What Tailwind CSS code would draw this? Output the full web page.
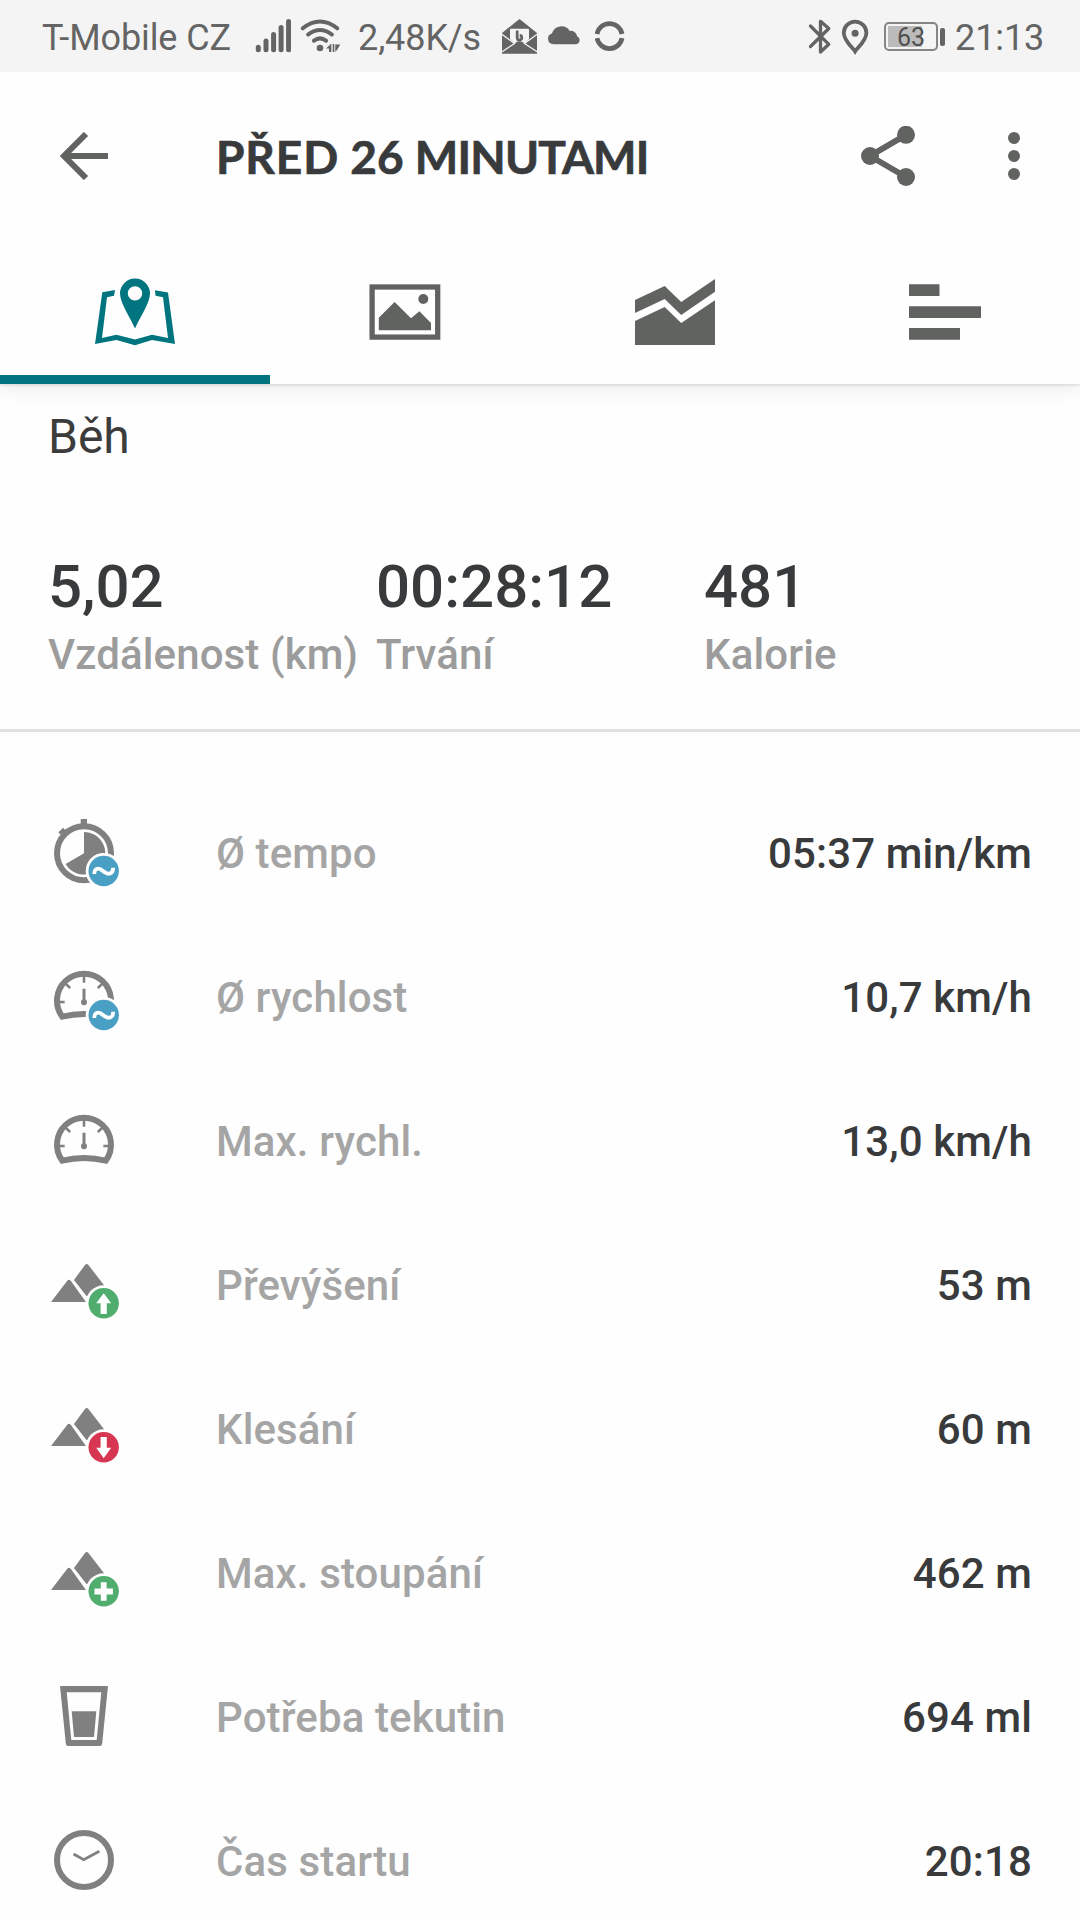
<!doctype html>
<html lang="cs">
  <head>
    <meta charset="UTF-8" />
    <meta name="viewport" content="width=device-width, initial-scale=1.0" />
    <title>Před 26 minutami</title>
    <script src="https://cdn.jsdelivr.net/npm/@tailwindcss/browser@4"></script>
  </head>
  <body class="bg-[#fefefe] h-[1920px] overflow-hidden font-['Roboto',sans-serif] text-[#383a3b]">
    <!-- Status bar -->
    <div class="relative z-10 h-[72px] bg-[#f4f4f4] text-[#646464] text-[36px] leading-[72px] flex items-center pl-[42px] pr-[36px] whitespace-nowrap">
      <span class="w-[213px] pt-[3px] tracking-[-0.1px]">T-Mobile CZ</span>
      <svg class="w-[36px] h-[72px] shrink-0" viewBox="255 0 36 72" fill="none" stroke="#646464" stroke-width="5" stroke-linecap="round">
        <path d="M258.3 47.3v2.5M266 41v8.8M273.6 34.5v15.3M281.1 27.5v22.3M288.6 21.5v28.3" />
      </svg>
      <svg class="w-[42px] h-[72px] ml-[9px] shrink-0" viewBox="300 0 42 72" fill="none" stroke="#646464" stroke-width="4" stroke-linecap="round">
        <path d="M302.8 28.3q17.2-13.6 34.4 0M308.2 34.5q11.8-9 23.6 0M314 40.7q6-4.6 12 0" />
        <circle cx="320" cy="48" r="3.3" fill="#646464" stroke="none" />
        <path d="M326 48.5l5.300-5v8.500h-2.300v-3.500zM332.700 44h1.600v8h-1.600zM335.300 44.500h5l-2.700 4.500-2.300 3z" fill="#646464" stroke="none" />
      </svg>
      <span class="w-[144px] ml-[16px] pt-[3px] tracking-[-0.1px]">2,48K/s</span>
      <svg class="w-[36px] h-[72px] shrink-0" viewBox="502 0 36 72" fill="#646464">
        <path d="M502 33 519.500 19 537 33V53.700H502z" />
        <path d="M510 29.700q0-1 1-1h17q1 0 1 1V39l-4.500 4.500q-5-4.500-10 0L510 39z" fill="#f4f4f4" />
        <path d="M501.500 34l13 9.500L501.500 52M537.500 34l-13 9.500 13 8.500" fill="none" stroke="#f4f4f4" stroke-width="1.300" />
        <path d="M517.200 30.500v7.500a2.300 2.300 0 1 0 2.500-2.600" fill="none" stroke="#646464" stroke-width="2.800" />
      </svg>
      <svg class="w-[34px] h-[72px] ml-[10px] shrink-0" viewBox="548 0 34 72" fill="#646464">
        <path d="M553.5 44.2a5.400 5.400 0 0 1-1.500-10.600 9.800 9.800 0 0 1 17.700-2.700 6.500 6.500 0 0 1 7.400 5.300 4.200 4.200 0 0 1-1 8z" />
      </svg>
      <svg class="w-[30px] h-[72px] ml-[13px] shrink-0" viewBox="595 0 30 72" fill="none" stroke="#646464" stroke-width="4.800">
        <path d="M597 34.200a12.700 12.700 0 0 1 25 0M597 38.300a12.700 12.700 0 0 0 25 0" transform="translate(0 -.2)" />
      </svg>
      <svg class="w-[24px] h-[72px] ml-auto shrink-0" viewBox="808 0 24 72" fill="none" stroke="#646464" stroke-width="3.300" stroke-linecap="round" stroke-linejoin="round">
        <path d="M810.5 26 828.8 44.3 820.5 52V21.3L828.8 28.5 810.5 46.5" />
      </svg>
      <svg class="w-[28px] h-[72px] ml-[9px] shrink-0" viewBox="841 0 28 72">
        <path d="M855.1 51.3c-1.500-2.600-11.300-10.600-11.300-18.400a11.300 11.300 0 0 1 22.600 0c0 7.800-9.800 15.800-11.300 18.400z" fill="none" stroke="#646464" stroke-width="3.800" />
        <circle cx="855.1" cy="33.3" r="3.500" fill="#646464" />
      </svg>
      <div class="ml-[15px] w-[54px] h-[29px] mt-[1px] shrink-0 border-2 border-[#858585] rounded-[5px] relative">
        <div class="absolute left-[2px] top-[2px] w-[34px] h-[21px] bg-[#bbbbbb]"></div>
        <span class="absolute inset-0 text-center leading-[27px] text-[25px] text-[#505050]">63</span>
      </div>
      <div class="ml-[2px] w-[5px] h-[18px] shrink-0 rounded-[2px] bg-[#646464] mt-[1px]"></div>
      <span class="ml-[10px] w-[89px] pt-[3px] tracking-[-0.1px]">21:13</span>
    </div>

    <!-- Toolbar and tabs -->
    <header class="h-[312px] bg-[#fefefe] shadow-[0_2px_20px_rgba(0,0,0,0.1),0_1px_3px_rgba(0,0,0,0.12)]">
      <div class="h-[168px] flex items-center pl-[60px] pr-[60px]">
        <svg class="w-[48px] h-[48px]" viewBox="0 0 48 48" fill="none" stroke="#616361" stroke-width="6">
          <path d="M48 24H4M26 2 4 24l22 22" />
        </svg>
        <h1 class="ml-[108px] pt-[1px] font-['Lato',sans-serif] font-bold text-[46px] leading-[60px] whitespace-nowrap [-webkit-text-stroke:0.7px_#383a3b]"><span class="tracking-[0.9px]">PŘED</span> 26 <span class="tracking-[-0.8px]">MINUTAMI</span></h1>
        <svg class="ml-auto w-[54px] h-[60px]" viewBox="861 126 54 60" fill="#616361">
          <path d="M906 134.8 870 156l36 21" fill="none" stroke="#616361" stroke-width="6" />
          <circle cx="870" cy="156" r="9" />
          <circle cx="906" cy="134.8" r="9" />
          <circle cx="906" cy="177" r="9" />
        </svg>
        <svg class="ml-[93px] w-[12px] h-[48px]" viewBox="0 0 12 48" fill="#616361">
          <circle cx="6" cy="6" r="6" />
          <circle cx="6" cy="24" r="6" />
          <circle cx="6" cy="42" r="6" />
        </svg>
      </div>
      <nav class="h-[144px] grid grid-cols-4">
        <div class="border-b-[9px] border-[#00757f] flex justify-center">
          <svg class="w-[90px] h-[90px] mt-[27px]" viewBox="90 267 90 90" fill="#00757f">
            <path d="M95 344 102.300 292.300 115 290 114 295.700 107 297.300 102 338 116.400 334.700 135 339.500 152 334.700 168 338 163 297.300 155.500 295.700 155 290.300 168 292.500 175 344 152 340 135 345.300 116.400 340z" />
            <path fill-rule="evenodd" d="M135 328.500C131 319 120 303 120 293.500a15 15 0 0 1 30 0C150 303 139 319 135 328.500zM135 286.200a7.200 7.200 0 1 0 0 14.400 7.200 7.200 0 0 0 0-14.400z" />
          </svg>
        </div>
        <div class="flex justify-center">
          <svg class="w-[90px] h-[90px] mt-[27px]" viewBox="360 267 90 90" fill="#616361">
            <rect x="372.100" y="287" width="65.600" height="50.100" fill="none" stroke="#616361" stroke-width="5.300" />
            <path d="M378.800 317.700 394.600 302 411 318.300 419.400 311.300 431 323V330.300H378.800z" />
            <circle cx="423.300" cy="299" r="5" />
          </svg>
        </div>
        <div class="flex justify-center">
          <svg class="w-[90px] h-[90px] mt-[27px]" viewBox="630 267 90 90" fill="#616361">
            <path d="M635 300 664.700 286 681.200 302 715 279V291.700L681.200 315 664.700 299 635 313z" />
            <path d="M635 321 664.700 307 681.200 323 715 300.300V345H635z" />
          </svg>
        </div>
        <div class="flex justify-center">
          <svg class="w-[90px] h-[90px] mt-[27px]" viewBox="900 267 90 90" fill="#616361">
            <path d="M909 284.200h30.500v11.800H909zM909 306.200h72v11.800h-72zM909 328h51v11.800h-51z" />
          </svg>
        </div>
      </nav>
    </header>

    <!-- Activity summary -->
    <section class="h-[348px] border-b-[3px] border-[#e0e0e0] pl-[48px]">
      <h2 class="pt-[25px] text-[48px] leading-[56px] text-[#3c3c3c]">Běh</h2>
      <div class="grid grid-cols-3 w-[984px] mt-[87px] font-medium whitespace-nowrap">
        <div>
          <div class="text-[60px] leading-[70px]">5,02</div>
          <div class="text-[42px] leading-[50px] mt-[8px] text-[#9b9c9b] tracking-[0.12px]">Vzdálenost (km)</div>
        </div>
        <div>
          <div class="text-[60px] leading-[70px]">00:28:12</div>
          <div class="text-[42px] leading-[50px] mt-[8px] text-[#9b9c9b] tracking-[0.12px]">Trvání</div>
        </div>
        <div>
          <div class="text-[60px] leading-[70px]">481</div>
          <div class="text-[42px] leading-[50px] mt-[8px] text-[#9b9c9b] tracking-[0.12px]">Kalorie</div>
        </div>
      </div>
    </section>

    <!-- Shared icon parts -->
    <svg class="hidden">
      <symbol id="average" viewBox="0 0 72 72">
        <circle cx="55.700" cy="55" r="18" fill="#fefefe" />
        <circle cx="55.700" cy="55" r="15.200" fill="#4aa0c4" />
        <path d="M46.300 58c0-6 4.500-6.500 7.400-3.800l3.200 2.100c3.800 2.800 8.400 1.500 8.200-4.600" fill="none" stroke="#fff" stroke-width="3.800" />
      </symbol>
      <symbol id="gauge" viewBox="0 0 72 72">
        <g fill="none" stroke="#808080">
          <path d="M14.300 56.700A27 27 0 1 1 57.700 56.700Q36 51.500 14.300 56.700z" stroke-width="6" />
          <path d="M36 16v6.700M12 42h4.700M60 42h-4.700M17.500 23.500l4.700 4.700M54.500 23.500l-4.700 4.700" stroke-width="2.600" />
          <path d="M36 28.700V42" stroke-width="3" />
        </g>
        <circle cx="36" cy="42.300" r="3" fill="#808080" />
      </symbol>
      <symbol id="mountains" viewBox="0 0 72 72">
        <path d="M26 32 36.800 17.200q1.900-2.400 3.800 0L57 38.500 38.700 48.300z" fill="#808080" />
        <path d="M3 54 19.300 32.800q1.700-2 3.400 0L38 54z" fill="#808080" />
        <circle cx="55.700" cy="55.300" r="18" fill="#fefefe" />
      </symbol>
    </svg>

    <!-- Details -->
    <main class="pt-[48px] text-[42px] leading-[50px] font-medium whitespace-nowrap tracking-[0.12px]">
      <div class="h-[144px] pl-[48px] pr-[48px] flex items-center">
        <svg class="w-[72px] h-[72px]" viewBox="0 0 72 72">
          <circle cx="36" cy="37.300" r="27" fill="none" stroke="#808080" stroke-width="6" />
          <path d="M32.700 3h6.300v8h-6.300zM10.500 16.200l4.500-4.500 2 2 2-1.500v5h-5l-1.500 1.500zM36 37.300V16a21.300 21.300 0 1 1-18.400 32z" fill="#808080" />
          <use href="#average" />
        </svg>
        <span class="ml-[96px] pt-[4px] text-[#a5a5a5]">Ø tempo</span>
        <span class="ml-auto pt-[4px]">05:37 min/km</span>
      </div>
      <div class="h-[144px] pl-[48px] pr-[48px] flex items-center">
        <svg class="w-[72px] h-[72px]" viewBox="0 0 72 72">
          <use href="#gauge" />
          <use href="#average" />
        </svg>
        <span class="ml-[96px] pt-[4px] text-[#a5a5a5]">Ø rychlost</span>
        <span class="ml-auto pt-[4px]">10,7 km/h</span>
      </div>
      <div class="h-[144px] pl-[48px] pr-[48px] flex items-center">
        <svg class="w-[72px] h-[72px]" viewBox="0 0 72 72">
          <use href="#gauge" />
        </svg>
        <span class="ml-[96px] pt-[4px] text-[#a5a5a5]">Max. rychl.</span>
        <span class="ml-auto pt-[4px]">13,0 km/h</span>
      </div>
      <div class="h-[144px] pl-[48px] pr-[48px] flex items-center">
        <svg class="w-[72px] h-[72px]" viewBox="0 0 72 72">
          <use href="#mountains" />
          <circle cx="55.700" cy="55.300" r="15.200" fill="#50ad6e" />
          <path d="M55.700 45.300 63.200 55.300h-4.400V66h-6.200V55.300h-4.400z" fill="#fff" />
        </svg>
        <span class="ml-[96px] pt-[4px] text-[#a5a5a5]">Převýšení</span>
        <span class="ml-auto pt-[4px]">53 m</span>
      </div>
      <div class="h-[144px] pl-[48px] pr-[48px] flex items-center">
        <svg class="w-[72px] h-[72px]" viewBox="0 0 72 72">
          <use href="#mountains" />
          <circle cx="55.700" cy="55.300" r="15.200" fill="#d63652" />
          <path d="M55.700 66.300 63.200 55.700h-4.400V45h-6.200v10.700h-4.400z" fill="#fff" />
        </svg>
        <span class="ml-[96px] pt-[4px] text-[#a5a5a5]">Klesání</span>
        <span class="ml-auto pt-[4px]">60 m</span>
      </div>
      <div class="h-[144px] pl-[48px] pr-[48px] flex items-center">
        <svg class="w-[72px] h-[72px]" viewBox="0 0 72 72">
          <use href="#mountains" />
          <circle cx="55.700" cy="55.300" r="15.200" fill="#50ad6e" />
          <path d="M55.700 46.300v18.400M46.500 55.500h18.400" stroke="#fff" stroke-width="5.800" />
        </svg>
        <span class="ml-[96px] pt-[4px] text-[#a5a5a5]">Max. stoupání</span>
        <span class="ml-auto pt-[4px]">462 m</span>
      </div>
      <div class="h-[144px] pl-[48px] pr-[48px] flex items-center">
        <svg class="w-[72px] h-[72px]" viewBox="0 0 72 72" fill="#808080">
          <path fill-rule="evenodd" d="M12 6h48l-5.800 57.500q-.2 2.500-2.700 2.500h-31q-2.500 0-2.700-2.500zM18.700 12.200 23.300 60h25.400l4.600-47.800z" />
          <path d="M23.700 31.300h24.600L46 57H26z" />
        </svg>
        <span class="ml-[96px] pt-[4px] text-[#a5a5a5]">Potřeba tekutin</span>
        <span class="ml-auto pt-[4px]">694 ml</span>
      </div>
      <div class="h-[144px] pl-[48px] pr-[48px] flex items-center">
        <svg class="w-[72px] h-[72px]" viewBox="0 0 72 72" fill="none" stroke="#808080">
          <circle cx="36" cy="36" r="27" stroke-width="6" />
          <path d="M25.500 30 35.700 35.700 51.300 27.200" stroke-width="2.800" />
        </svg>
        <span class="ml-[96px] pt-[4px] text-[#a5a5a5]">Čas startu</span>
        <span class="ml-auto pt-[4px]">20:18</span>
      </div>
    </main>
  </body>
</html>
